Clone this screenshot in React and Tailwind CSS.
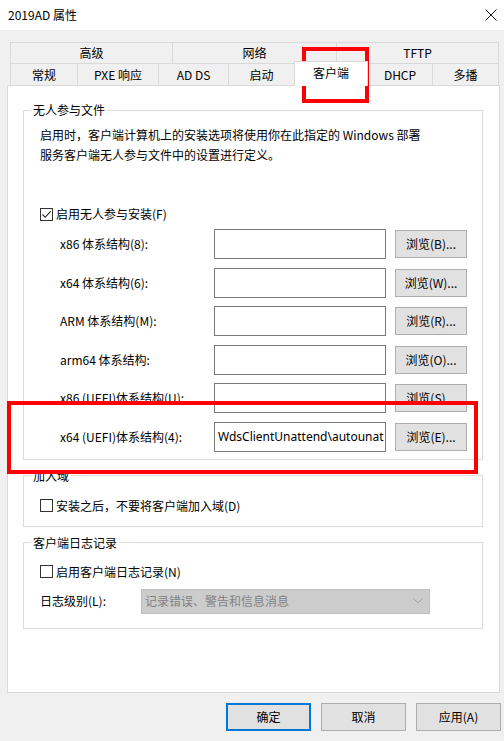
import React from "react";

const font = { fontFamily: '"Noto Sans CJK SC", "Noto Sans", sans-serif' };

const topTabs = [
  { label: "高级", w: "w-[162px]" },
  { label: "网络", w: "w-[164px]" },
  { label: "TFTP", w: "w-[163px]" },
];

const bottomTabs = [
  { label: "常规", w: "w-[67px]" },
  { label: "PXE 响应", w: "w-[81px]" },
  { label: "AD DS", w: "w-[70px]" },
  { label: "启动", w: "w-[66px]" },
  { label: "客户端", w: "w-[74px]", active: true },
  { label: "DHCP", w: "w-[64px]" },
  { label: "多播", w: "w-[67px]" },
];

const archRows = [
  { label: "x86 体系结构(8):", btn: "浏览(B)..." },
  { label: "x64 体系结构(6):", btn: "浏览(W)..." },
  { label: "ARM 体系结构(M):", btn: "浏览(R)..." },
  { label: "arm64 体系结构:", btn: "浏览(O)..." },
  { label: "x86 (UEFI)体系结构(U):", btn: "浏览(S)..." },
  { label: "x64 (UEFI)体系结构(4):", btn: "浏览(E)...", value: "WdsClientUnattend\\autounat" },
];

const CheckBox = ({ checked, label }) => (
  <div className="flex items-center h-[16px] gap-[3px]">
    <div className="w-[13px] h-[13px] border border-[#333333] bg-white flex items-center justify-center">
      {checked && (
        <svg width="11" height="11" viewBox="0 0 11 11">
          <path d="M1.5 5.5 L4.2 8.3 L9.6 2.4" fill="none" stroke="#222" strokeWidth="1.1" />
        </svg>
      )}
    </div>
    <span className="text-[12px] leading-[16px] text-black">{label}</span>
  </div>
);

const Group = ({ title, className = "", children }) => (
  <fieldset className={`border border-[#dcdcdc] ${className}`}>
    <legend className="ml-[7px] px-[2px] text-[12px] leading-[16px] text-black">{title}</legend>
    {children}
  </fieldset>
);

export default function App() {
  return (
    <div className="relative w-[504px] h-[741px] bg-[#f0f0f0] overflow-hidden text-black" style={font}>
      {/* title bar */}
      <div className="h-[30px] bg-white flex items-center justify-between pl-[8px] pr-[6px]">
        <span className="text-[12px] leading-[16px]">2019AD 属性</span>
        <svg width="12" height="12" viewBox="0 0 12 12" className="mr-[1px]">
          <path d="M0.5 0.5 L11.5 11.5 M11.5 0.5 L0.5 11.5" stroke="#111" strokeWidth="1" />
        </svg>
      </div>

      {/* tabs */}
      <div className="ml-[10px] mt-[12px]">
        <div className="flex h-[21px]">
          {topTabs.map((t, i) => (
            <div
              key={t.label}
              className={`${t.w} flex items-center justify-center border-t border-l border-[#d9d9d9] ${i === topTabs.length - 1 ? "border-r" : ""} text-[12px] leading-[16px]`}
            >
              {t.label}
            </div>
          ))}
        </div>
        <div className="flex h-[22px] items-end">
          {bottomTabs.map((t, i) =>
            t.active ? (
              <div
                key={t.label}
                className={`${t.w} relative z-10 h-[25px] -mb-[1px] bg-white border-t border-l border-r border-[#d9d9d9] flex justify-center pt-[3px] text-[12px] leading-[16px]`}
              >
                {t.label}
              </div>
            ) : (
              <div
                key={t.label}
                className={`${t.w} h-[22px] flex items-center justify-center border-t border-l border-[#d9d9d9] ${i === bottomTabs.length - 1 ? "border-r" : ""} ${bottomTabs[i - 1]?.active ? "border-l-0" : ""} text-[12px] leading-[16px]`}
              >
                {t.label}
              </div>
            )
          )}
        </div>
      </div>

      {/* tab page */}
      <div className="ml-[7px] w-[493px] h-[608px] bg-white border border-[#d9d9d9] pt-[16px] pl-[15px] pr-[16px]">
        <Group title="无人参与文件" className="pb-[7px]">
          <div className="pl-[16px] mt-[7px] text-[12px] leading-[20px]">
            <p>启用时，客户端计算机上的安装选项将使用你在此指定的 Windows 部署</p>
            <p>服务客户端无人参与文件中的设置进行定义。</p>
          </div>
          <div className="pl-[16px] mt-[41px]">
            <CheckBox checked label="启用无人参与安装(F)" />
          </div>
          <div className="mt-[7px] flex flex-col gap-[8.5px]">
            {archRows.map((r) => (
              <div key={r.btn} className="flex items-center h-[30px]">
                <span className="w-[190px] pl-[36px] text-[12px] leading-[16px]">{r.label}</span>
                <div className="w-[172px] h-[30px] border border-[#7a7a7a] bg-white flex items-center pl-[3px] overflow-hidden whitespace-nowrap">
                  {r.value && (
                    <span className="text-[12px] leading-[16px]" style={{ fontFamily: '"Noto Sans", sans-serif' }}>
                      {r.value}
                    </span>
                  )}
                </div>
                <button className="ml-[9px] w-[72px] h-[28px] bg-[#e1e1e1] border border-[#adadad] text-[12px] leading-[16px]">
                  {r.btn}
                </button>
              </div>
            ))}
          </div>
        </Group>

        <Group title="加入域" className="mt-[8px] pb-[12px]">
          <div className="pl-[16px] mt-[14px]">
            <CheckBox label="安装之后，不要将客户端加入域(D)" />
          </div>
        </Group>

        <Group title="客户端日志记录" className="mt-[8px] pb-[14px]">
          <div className="pl-[16px] mt-[13px]">
            <CheckBox label="启用客户端日志记录(N)" />
          </div>
          <div className="pl-[16px] mt-[9px] flex items-center h-[25px]">
            <span className="w-[101px] text-[12px] leading-[16px]">日志级别(L):</span>
            <div className="w-[289px] h-[25px] bg-[#cccccc] border border-[#bfbfbf] flex items-center justify-between pl-[3px] pr-[6px]">
              <span className="text-[12px] leading-[16px] text-[#838383]">记录错误、警告和信息消息</span>
              <svg width="10" height="6" viewBox="0 0 10 6">
                <path d="M0.5 0.5 L5 5 L9.5 0.5" fill="none" stroke="#a3a3a3" strokeWidth="1" />
              </svg>
            </div>
          </div>
        </Group>
      </div>

      {/* dialog buttons */}
      <div className="mt-[10px] flex justify-end gap-[10px] pr-[3px]">
        <button className="w-[85px] h-[28px] bg-[#e1e1e1] border-2 border-[#0078d7] text-[12px] leading-[16px]">确定</button>
        <button className="w-[85px] h-[28px] bg-[#e1e1e1] border border-[#adadad] text-[12px] leading-[16px]">取消</button>
        <button className="w-[85px] h-[28px] bg-[#e1e1e1] border border-[#adadad] text-[12px] leading-[16px]">应用(A)</button>
      </div>

      {/* red annotation boxes */}
      <div className="absolute left-[302px] top-[47px] w-[67px] h-[56px] border-4 border-[#ff0000] pointer-events-none" />
      <div className="absolute left-[7px] top-[401px] w-[471px] h-[73px] border-4 border-[#ff0000] pointer-events-none" />
    </div>
  );
}
